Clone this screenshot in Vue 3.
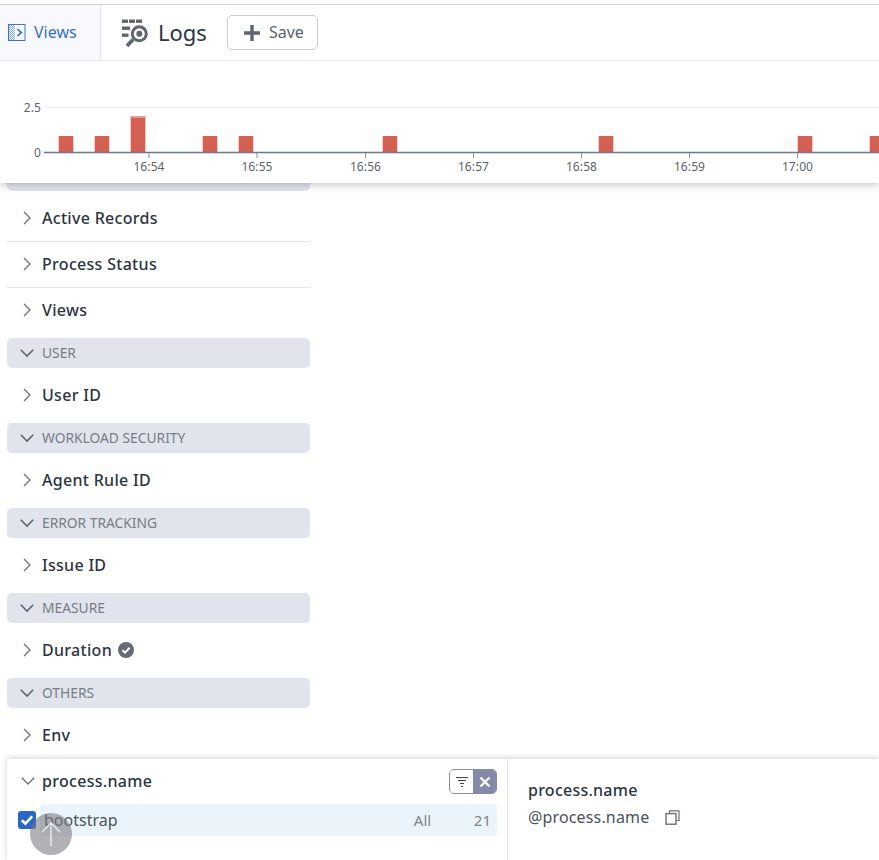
<script setup>
const barHeights = [
  { x: 58, h: 16 }, { x: 94, h: 16 }, { x: 130, h: 36, cap: true },
  { x: 202, h: 16 }, { x: 238, h: 16 }, { x: 382, h: 16 },
  { x: 598, h: 16 }, { x: 797, h: 16 }, { x: 869, h: 16 },
]
const ticks = [
  { x: 149, t: '16:54' }, { x: 257, t: '16:55' }, { x: 365.5, t: '16:56' }, { x: 473.5, t: '16:57' },
  { x: 581.5, t: '16:58' }, { x: 689.5, t: '16:59' }, { x: 797.5, t: '17:00' },
]
const topRows = ['Active Records', 'Process Status', 'Views']
const groups = [
  { name: 'USER', row: 'User ID' },
  { name: 'WORKLOAD SECURITY', row: 'Agent Rule ID' },
  { name: 'ERROR TRACKING', row: 'Issue ID' },
  { name: 'MEASURE', row: 'Duration', check: true },
  { name: 'OTHERS', row: 'Env' },
]
</script>

<template>
  <div class="page">
    <header class="topbar">
      <div class="tab">
        <svg class="tab-icon" width="18" height="18" viewBox="0 0 18 18">
          <defs>
            <pattern id="hatch" width="2" height="2" patternUnits="userSpaceOnUse">
              <rect width="1" height="1" fill="#3d74c9" />
              <rect x="1" y="1" width="1" height="1" fill="#3d74c9" />
            </pattern>
          </defs>
          <rect x="1" y="1" width="6" height="16" fill="url(#hatch)" opacity=".6" />
          <rect x=".5" y=".5" width="16.5" height="16" fill="none" stroke="#3d74c9" />
          <path d="M9.5 5 L13.2 8.5 L9.5 12" fill="none" stroke="#2f66bd" stroke-width="1.7" />
        </svg>
        <span class="lift">Views</span>
      </div>
      <div class="title">
        <svg width="28" height="30" viewBox="0 0 28 30" class="logs-icon">
          <g fill="#5f6670">
            <rect x="1" y="1.5" width="6" height="3.4" /><rect x="8" y="1.5" width="6" height="3.4" /><rect x="15" y="1.5" width="6" height="3.4" />
            <rect x="1" y="8.5" width="8" height="3.4" />
            <rect x="1" y="15.5" width="6.5" height="3.4" />
            <circle cx="18.3" cy="15.8" r="3" />
          </g>
          <circle cx="18.3" cy="15.8" r="7" fill="none" stroke="#5f6670" stroke-width="3" />
          <path d="M12 21.5 L6 28" stroke="#5f6670" stroke-width="3.8" fill="none" />
        </svg>
        <span class="lift">Logs</span>
      </div>
      <button class="save">
        <svg width="18" height="18" viewBox="0 0 18 18"><path d="M9 1v16M1 9h16" stroke="#5f6670" stroke-width="3.4" /></svg>
        <span class="lift">Save</span>
      </button>
    </header>

    <section class="chart">
      <svg width="879" height="122" viewBox="0 61 879 122">
        <line x1="44" y1="107.5" x2="879" y2="107.5" stroke="#eceef0" />
        <text x="41" y="112" text-anchor="end" class="ct">2.5</text>
        <text x="41" y="157" text-anchor="end" class="ct">0</text>
        <g v-for="b in barHeights" :key="b.x">
          <rect :x="b.x" :y="152 - b.h" width="16" :height="b.h" fill="#f2cbc7" />
          <rect :x="b.x + 1" :y="152 - b.h" width="14" :height="b.h" fill="#d46053" />
          <rect v-if="b.cap" :x="b.x + 1" :y="152 - b.h" width="14" height="2" fill="#e29a92" />
        </g>
        <line x1="44" y1="152.5" x2="879" y2="152.5" stroke="#6f7690" stroke-width="1.5" />
        <g v-for="t in ticks" :key="t.t">
          <line :x1="t.x" :x2="t.x" y1="153" y2="158" stroke="#8a90a4" />
          <text :x="t.x" y="171" text-anchor="middle" class="ct">{{ t.t }}</text>
        </g>
      </svg>
    </section>

    <main class="content">
      <aside class="facets">
        <div class="group-stub"></div>
        <div class="top-rows">
          <div v-for="r in topRows" :key="r" class="row ruled">
            <svg class="chev-r" width="10" height="14" viewBox="0 0 10 14"><path d="M2 1 L8 7 L2 13" fill="none" stroke="#70757d" stroke-width="1.4" /></svg>
            <span>{{ r }}</span>
          </div>
        </div>
        <template v-for="g in groups" :key="g.name">
          <div class="group">
            <svg width="14" height="10" viewBox="0 0 14 10"><path d="M.8 1.8 L7 8 L13.2 1.8" fill="none" stroke="#60656e" stroke-width="1.6" /></svg>
            <span class="group-name">{{ g.name }}</span>
          </div>
          <div class="row">
            <svg class="chev-r" width="10" height="14" viewBox="0 0 10 14"><path d="M2 1 L8 7 L2 13" fill="none" stroke="#70757d" stroke-width="1.4" /></svg>
            <span>{{ g.row }}</span>
            <svg v-if="g.check" class="verified" width="16" height="16" viewBox="0 0 16 16">
              <circle cx="8" cy="8" r="8" fill="#666c75" />
              <path d="M4.4 8.2 L7 10.6 L11.6 5.8" fill="none" stroke="#fff" stroke-width="2" />
            </svg>
          </div>
        </template>
      </aside>

      <section class="panel">
        <div class="panel-left">
          <div class="panel-head">
            <svg width="14" height="10" viewBox="0 0 14 10"><path d="M.8 1.8 L7 8 L13.2 1.8" fill="none" stroke="#70757d" stroke-width="1.4" /></svg>
            <span class="panel-name">process.name</span>
            <div class="filter">
              <span class="filter-a">
                <svg width="14" height="12" viewBox="0 0 14 12"><path d="M1 1.5h12M3 4.5h8M5 7.5h4M6 10.5h2" stroke="#3f4650" stroke-width="1.2" /></svg>
              </span>
              <span class="filter-b">
                <svg width="12" height="12" viewBox="0 0 12 12"><path d="M1.5 1.5 L10.5 10.5 M10.5 1.5 L1.5 10.5" stroke="#fff" stroke-width="2.4" /></svg>
              </span>
            </div>
          </div>
          <div class="value-line">
            <span class="checkbox">
              <svg width="14" height="12" viewBox="0 0 14 12"><path d="M1.8 6.2 L5.4 9.6 L12.2 2.4" fill="none" stroke="#fff" stroke-width="2.6" /></svg>
            </span>
            <div class="value">
              <span class="value-name">bootstrap</span>
              <span class="value-all">All</span>
              <span class="value-count">21</span>
            </div>
          </div>
        </div>
        <div class="panel-right">
          <div class="attr-title">process.name</div>
          <div class="attr-path">
            <span>@process.name</span>
            <svg width="15" height="15" viewBox="0 0 15 15"><path d="M4.5 3.5 V.8 H14 V10.5 H11.5" fill="none" stroke="#6b7178" stroke-width="1.2" /><rect x="1" y="3.6" width="10" height="10.6" fill="none" stroke="#6b7178" stroke-width="1.4" /></svg>
          </div>
        </div>
      </section>

      <button class="to-top" aria-label="Back to top">
        <svg width="20" height="26" viewBox="0 0 20 26"><path d="M10 25 V2 M1 11 L10 2 L19 11" fill="none" stroke="#eceded" stroke-width="1.4" /></svg>
      </button>
    </main>
  </div>
</template>

<style>
html, body { margin: 0; background: #fff; }
</style>

<style scoped>
.page {
  width: 879px;
  height: 860px;
  overflow: hidden;
  display: flex;
  flex-direction: column;
  padding-top: 4px;
  box-sizing: border-box;
  font-family: "Noto Sans", sans-serif;
  color: #2c3541;
  background: #fff;
}
.topbar {
  height: 57px;
  flex: none;
  box-sizing: border-box;
  display: flex;
  align-items: center;
  border-top: 1px solid #cdd0d4;
  border-bottom: 1px solid #e6e7ef;
  position: relative;
  z-index: 3;
  background: #fff;
}
.lift { margin-bottom: 2px; }
.tab {
  width: 101px;
  height: 100%;
  box-sizing: border-box;
  display: flex;
  align-items: center;
  padding-left: 8px;
  gap: 8px;
  background: #f8f9fc;
  border-right: 1px solid #e3e5ee;
  color: #3a70c4;
  font-size: 16px;
}
.title {
  display: flex;
  align-items: center;
  margin-left: 20px;
  font-size: 22px;
  color: #2c3541;
  gap: 9px;
}
.save {
  margin-left: 20px;
  width: 91px;
  height: 35px;
  border: 1px solid #c6cadb;
  border-radius: 5px;
  background: #fff;
  display: flex;
  align-items: center;
  padding: 0 0 0 15px;
  gap: 8px;
  font: 16px "Noto Sans", sans-serif;
  color: #5b626b;
}
.chart {
  height: 122px;
  flex: none;
  background: #fff;
  position: relative;
  z-index: 2;
  box-shadow: 0 2px 8px rgba(40, 45, 60, .28);
}
.chart svg { display: block; }
.ct { font: 12px "Noto Sans", sans-serif; fill: #5d636b; letter-spacing: .1px; }
.content {
  flex: 1;
  position: relative;
  overflow: hidden;
}
.facets {
  width: 303px;
  margin-left: 7px;
}
.group-stub {
  height: 8px;
  background: #e1e4ec;
  border-radius: 0 0 5px 5px;
}
.top-rows { margin-top: 4px; }
.row {
  height: 46px;
  display: flex;
  align-items: center;
  box-sizing: border-box;
  padding-left: 15px;
  font-size: 16px;
  font-weight: 500;
  letter-spacing: .3px;
  color: #2c3541;
  margin-top: 4px;
}
.top-rows .row { margin-top: 0; }
.ruled { box-shadow: 0 1px 0 #e6e7eb; }
.ruled:last-child { box-shadow: none; }
.chev-r { margin-right: 10px; }
.verified { margin-left: 6px; }
.group {
  height: 30px;
  margin-top: 5px;
  background: #e1e4ec;
  border-radius: 5px;
  display: flex;
  align-items: center;
  padding-left: 13px;
  gap: 8px;
  font-size: 13.8px;
  color: #777d86;
}
.group-name { margin-bottom: 2px; }
.panel {
  position: absolute;
  left: 7px;
  right: 0;
  bottom: 0;
  height: 101px;
  display: flex;
  background: #fff;
  box-shadow: 0 -1px 6px rgba(40, 45, 60, .22);
}
.panel-left {
  width: 501px;
  box-sizing: border-box;
  border-right: 1px solid #e3e5ee;
  padding: 10px 10px 0 0;
}
.panel-head {
  height: 25px;
  display: flex;
  align-items: center;
  padding-left: 14px;
}
.panel-head > svg { margin-bottom: 2px; }
.panel-name {
  margin-left: 7px;
  margin-bottom: 2px;
  font-size: 16px;
  font-weight: 500;
  letter-spacing: .3px;
  flex: 1;
}
.filter {
  width: 48px;
  height: 25px;
  display: flex;
  border-radius: 5px;
  overflow: hidden;
  border: 1px solid #8689a8;
  box-sizing: border-box;
}
.filter-a { flex: 1; display: flex; align-items: center; justify-content: center; background: #fff; }
.filter-b { width: 23px; display: flex; align-items: center; justify-content: center; background: #8689a8; }
.value-line {
  display: flex;
  align-items: center;
  margin-top: 10px;
  padding-left: 11px;
}
.checkbox {
  width: 18px;
  height: 18px;
  flex: none;
  border-radius: 3px;
  background: #2a66c4;
  display: flex;
  align-items: center;
  justify-content: center;
}
.value {
  flex: 1;
  height: 32px;
  margin-left: 4px;
  padding: 0 6px 0 4px;
  background: #ebf4fb;
  border-radius: 4px;
  display: flex;
  align-items: center;
  font-size: 16px;
  color: #4a525c;
}
.value-name { flex: 1; }
.value-all { font-size: 15px; color: #7f858d; width: 60px; }
.value-count { font-size: 15px; color: #7f858d; }
.panel-right { padding: 19px 0 0 20px; }
.attr-title { font-size: 16px; font-weight: 500; letter-spacing: .25px; line-height: 24px; }
.attr-path {
  margin-top: 3px;
  display: flex;
  align-items: center;
  gap: 16px;
  font-size: 16px;
  letter-spacing: .15px;
  line-height: 24px;
  color: #4a525c;
}
.to-top {
  position: absolute;
  left: 30px;
  bottom: 5px;
  width: 42px;
  height: 42px;
  padding: 0;
  border: 0;
  border-radius: 50%;
  background: rgba(120, 122, 128, .58);
  display: flex;
  align-items: center;
  justify-content: center;
}
</style>
